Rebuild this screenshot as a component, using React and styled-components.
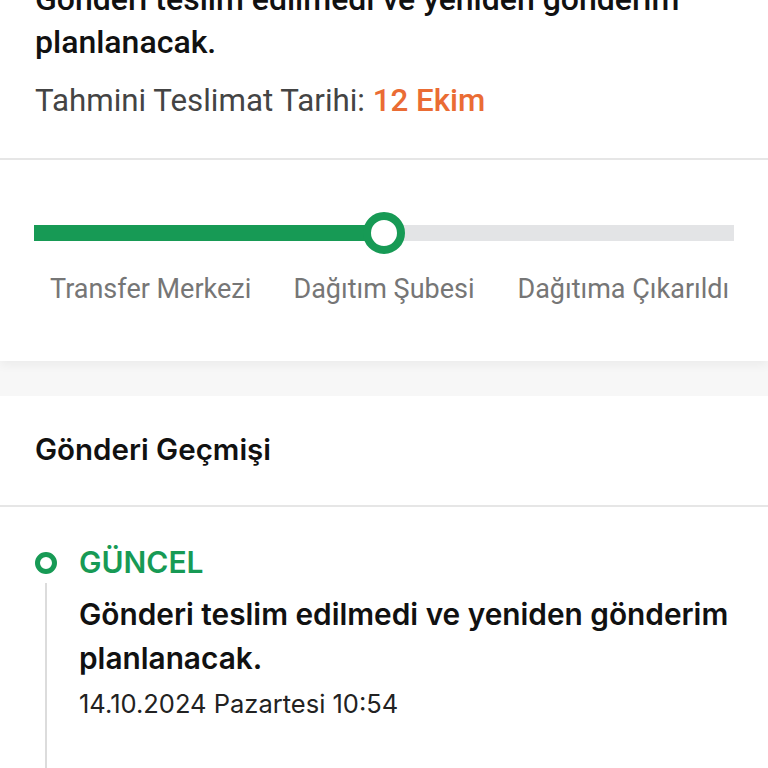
import React from "react";
import styled, { createGlobalStyle } from "styled-components";

const GlobalStyle = createGlobalStyle`
  html, body {
    margin: 0;
    padding: 0;
    background: #f7f7f7;
  }
  body {
    font-family: Roboto, "Liberation Sans", sans-serif;
    overflow: hidden;
  }
`;

const steps = ["Transfer Merkezi", "Dağıtım Şubesi", "Dağıtıma Çıkarıldı"];

export default function App() {
  const activeStep = 1;
  const progress = (activeStep + 0.5) / steps.length;

  return (
    <Page>
      <GlobalStyle />
      <StatusCard>
        <Summary>
          <StatusTitle>
            Gönderi teslim edilmedi ve yeniden gönderim planlanacak.
          </StatusTitle>
          <Estimate>
            Tahmini Teslimat Tarihi: <strong>12 Ekim</strong>
          </Estimate>
        </Summary>
        <Tracker>
          <Track>
            <Fill style={{ width: `${progress * 100}%` }} />
            <Knob style={{ left: `${progress * 100}%` }} />
          </Track>
          <Steps>
            {steps.map((s) => (
              <Step key={s}>{s}</Step>
            ))}
          </Steps>
        </Tracker>
      </StatusCard>

      <HistoryCard>
        <HistoryHeader>Gönderi Geçmişi</HistoryHeader>
        <Timeline>
          <Event>
            <EventRail>
              <Dot />
              <Line />
            </EventRail>
            <EventBody>
              <EventTag>GÜNCEL</EventTag>
              <EventText>
                Gönderi teslim edilmedi ve yeniden gönderim planlanacak.
              </EventText>
              <EventDate>14.10.2024 Pazartesi 10:54</EventDate>
            </EventBody>
          </Event>
        </Timeline>
      </HistoryCard>
    </Page>
  );
}

const Page = styled.div`
  width: 768px;
  height: 768px;
  overflow: hidden;
  background: #f7f7f7;
`;

const StatusCard = styled.section`
  background: #fff;
  margin-top: -22px;
  box-shadow: 0 4px 10px rgba(0, 0, 0, 0.05);
`;

const Summary = styled.div`
  padding: 0 35px 39px;
  border-bottom: 2px solid #e6e6e6;
`;

const StatusTitle = styled.h1`
  margin: 0;
  font-size: 32px;
  font-weight: 500;
  line-height: 43px;
  color: #111;
  max-width: 700px;
`;

const Estimate = styled.p`
  margin: 19px 0 0;
  font-size: 31.3px;
  line-height: 36px;
  color: #444;

  strong {
    font-weight: 500;
    color: #ea6c34;
  }
`;

const Tracker = styled.div`
  padding: 65px 34px 55px;
`;

const Track = styled.div`
  position: relative;
  height: 16px;
  background: #e3e4e6;
`;

const Fill = styled.div`
  height: 100%;
  background: #179a55;
`;

const Knob = styled.span`
  position: absolute;
  top: 50%;
  width: 26px;
  height: 26px;
  border: 8px solid #179a55;
  border-radius: 50%;
  background: #fff;
  transform: translate(-50%, -50%);
`;

const Steps = styled.div`
  display: grid;
  grid-template-columns: repeat(3, 1fr);
  margin-top: 31px;
`;

const Step = styled.div`
  text-align: center;
  font-size: 27px;
  line-height: 34px;
  color: #767676;
  white-space: nowrap;

  &:last-child {
    transform: translateX(6px);
  }
`;

const HistoryCard = styled.section`
  background: #fff;
  margin-top: 35px;
  font-family: Inter, "Liberation Sans", sans-serif;
`;

const HistoryHeader = styled.h2`
  margin: 0;
  padding: 32px 35px 35px;
  font-size: 29.5px;
  line-height: 42px;
  font-weight: 600;
  color: #111;
  border-bottom: 2px solid #e6e6e6;
`;

const Timeline = styled.div`
  padding: 36px 35px 0;
`;

const Event = styled.div`
  display: flex;
  gap: 22px;
`;

const EventRail = styled.div`
  display: flex;
  flex-direction: column;
  align-items: center;
  width: 22px;
  flex-shrink: 0;
  padding-top: 9px;
`;

const Dot = styled.span`
  width: 12px;
  height: 12px;
  border: 5px solid #179a55;
  border-radius: 50%;
  background: #fff;
`;

const Line = styled.span`
  width: 2px;
  height: 200px;
  margin-top: 9px;
  background: #dcdcdc;
`;

const EventBody = styled.div`
  display: flex;
  flex-direction: column;
`;

const EventTag = styled.div`
  font-size: 30px;
  line-height: 38px;
  font-weight: 600;
  color: #179a55;
`;

const EventText = styled.div`
  margin-top: 11px;
  font-size: 29.8px;
  line-height: 44px;
  font-weight: 600;
  color: #111;
`;

const EventDate = styled.div`
  margin-top: 6px;
  font-size: 25.5px;
  line-height: 36px;
  color: #222;
`;
